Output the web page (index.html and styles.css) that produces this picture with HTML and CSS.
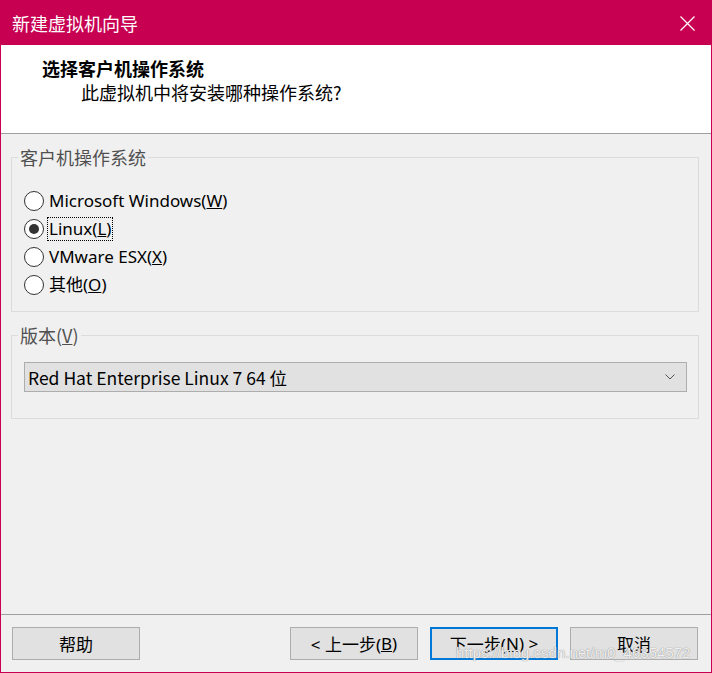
FILE: index.html
```html
<html>
    <head>
        <title>新建虚拟机向导</title>
        <link rel="stylesheet" href="styles.css">
    </head>
    <body>
        <div class="window">
            <div class="titlebar">
                <span class="title">新建虚拟机向导</span>
                <svg class="close" width="15" height="15" viewBox="0 0 15 15">
                    <path d="M0.5 0.5 L14.5 14.5 M14.5 0.5 L0.5 14.5" stroke="#ffffff" stroke-width="1.2" fill="none"/>
                </svg>
            </div>
            <div class="header">
                <div class="header-title">选择客户机操作系统</div>
                <div class="header-sub">此虚拟机中将安装哪种操作系统?</div>
            </div>
            <div class="content">
                <fieldset class="group">
                    <legend>客户机操作系统</legend>
                    <div class="radio-row"><span class="radio"></span><span class="label">Microsoft Windows(<u>W</u>)</span></div>
                    <div class="radio-row"><span class="radio checked"></span><span class="label focus">Linux(<u>L</u>)</span></div>
                    <div class="radio-row"><span class="radio"></span><span class="label">VMware ESX(<u>X</u>)</span></div>
                    <div class="radio-row"><span class="radio"></span><span class="label">其他(<u>O</u>)</span></div>
                </fieldset>
                <fieldset class="group group-version">
                    <legend>版本(<u>V</u>)</legend>
                    <div class="select">
                        <span>Red Hat Enterprise Linux 7 64 位</span>
                        <svg width="10" height="6" viewBox="0 0 10 6">
                            <polyline points="0.5,0.5 5,5 9.5,0.5" stroke="#555555" stroke-width="1" fill="none"/>
                        </svg>
                    </div>
                </fieldset>
            </div>
            <div class="footer">
                <div class="btn">帮助</div>
                <div class="spacer"></div>
                <div class="btn">&lt; 上一步(<u>B</u>)</div>
                <div class="btn primary">下一步(<u>N</u>) &gt;</div>
                <div class="btn">取消</div>
                <span class="watermark">https://blog.csdn.net/m0_46354572</span>
            </div>
        </div>
    </body>
</html>
```

FILE: styles.css
```css
body {
    margin: 0;
    font-family: "Noto Sans", "Noto Sans CJK SC", sans-serif;
    font-size: 16px;
    color: #000000;
}
.window {
    width: 712px;
    height: 673px;
    box-sizing: border-box;
    border: 1px solid #c70052;
    border-top: none;
    background: #f0f0f0;
    display: flex;
    flex-direction: column;
}
.titlebar {
    height: 45px;
    flex-shrink: 0;
    background: #c70052;
    margin: 0 -1px;
    padding: 0 17px 0 12px;
    display: flex;
    justify-content: space-between;
    align-items: center;
    color: #ffffff;
    font-family: "Noto Sans CJK SC", sans-serif;
    font-size: 18px;
}
.titlebar .close {
    margin-top: 1px;
}
.header {
    height: 89px;
    flex-shrink: 0;
    box-sizing: border-box;
    background: #ffffff;
    border-bottom: 1px solid #a0a0a0;
    padding: 11px 0 0 41px;
    font-family: "Noto Sans CJK SC", serif;
    font-size: 18px;
    line-height: 24px;
}
.header-title {
    font-weight: bold;
}
.header-sub {
    padding-left: 39px;
}
.content {
    flex: 1;
}
.group {
    margin: 13px 12px 0 10px;
    padding: 20px 11px 12px 12px;
    border: 1px solid #dcdcdc;
}
.group legend {
    margin-left: -6px;
    padding: 0 2px;
    font-family: "Noto Sans CJK SC", sans-serif;
    font-size: 18px;
    line-height: 20px;
    color: #505050;
}
.group-version {
    margin-top: 13px;
    padding-top: 17px;
    padding-bottom: 26px;
}
.radio-row {
    height: 28px;
    display: flex;
    align-items: center;
}
.radio {
    width: 18px;
    height: 18px;
    border: 1px solid #333333;
    border-radius: 50%;
    background: #ffffff;
    display: flex;
    align-items: center;
    justify-content: center;
    margin-right: 5px;
}
.radio.checked::after {
    content: "";
    width: 10px;
    height: 10px;
    border-radius: 50%;
    background: #333333;
}
.label {
    font-size: 17px;
    line-height: 22px;
    padding: 0 1px;
    margin-left: -1px;
}
.label.focus {
    outline: 1px dotted #000000;
}
.select {
    height: 30px;
    box-sizing: border-box;
    border: 1px solid #adadad;
    background: #e1e1e1;
    display: flex;
    align-items: center;
    justify-content: space-between;
    padding: 0 11px 0 3px;
    font-family: "Noto Sans CJK SC", sans-serif;
    font-size: 17.5px;
}
.footer {
    height: 58px;
    flex-shrink: 0;
    box-sizing: border-box;
    border-top: 1px solid #a0a0a0;
    padding: 12px 13px 12px 11px;
    display: flex;
    gap: 12px;
    position: relative;
}
.spacer {
    flex: 1;
}
.btn {
    width: 128px;
    height: 33px;
    box-sizing: border-box;
    border: 1px solid #adadad;
    background: #e1e1e1;
    display: flex;
    align-items: center;
    justify-content: center;
    font-family: "Noto Sans", "Noto Sans CJK SC", sans-serif;
    font-size: 17px;
}
.btn.primary {
    border: 2px solid #0078d7;
}
.watermark {
    position: absolute;
    left: 455px;
    top: 29px;
    white-space: nowrap;
    font-family: "Liberation Sans", sans-serif;
    font-size: 15px;
    color: rgba(255, 255, 255, 0.85);
    text-shadow: 0 0 1px #9a9a9a, 0 0 1px #9a9a9a;
}
```
